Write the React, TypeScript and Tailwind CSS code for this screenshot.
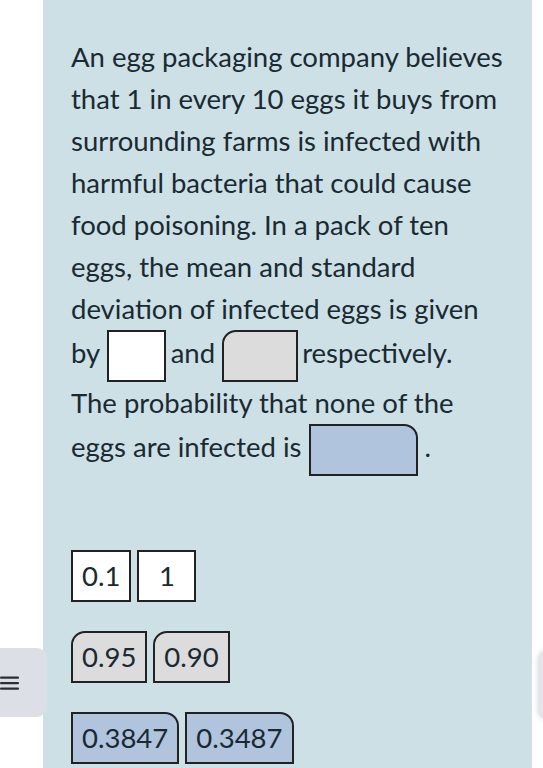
import React from "react";

const sansFont = { fontFamily: "Lato, 'Liberation Sans', sans-serif" };

function DropBox({ kind }: { kind: "white" | "gray" | "blue" }) {
  if (kind === "white")
    return <span className="inline-block align-middle -mr-[2px] w-[59px] h-[52px] bg-white border-2 border-[#222]" />;
  if (kind === "gray")
    return <span className="inline-block align-middle -mr-[3px] w-[76px] h-[52px] bg-[#dcdcdc] border-2 border-[#222] rounded-tl-[14px]" />;
  return <span className="inline-block align-middle w-[109px] h-[52px] bg-[#b0c4de] border-2 border-[#222] rounded-tr-[14px]" />;
}

function Chip({ label, kind }: { label: string; kind: "white" | "gray" | "blue" }) {
  const base = "h-[52px] flex items-center justify-center border-2 border-[#222] px-[9px] text-[27.5px] text-[#1a2a32]";
  if (kind === "white") return <div className={base + " bg-white min-w-[59px]"}>{label}</div>;
  if (kind === "gray") return <div className={base + " bg-[#dcdcdc] rounded-tl-[14px]"}>{label}</div>;
  return <div className={base + " bg-[#b0c4de] rounded-tr-[14px]"}>{label}</div>;
}

export default function App() {
  return (
    <div className="relative min-h-[768px] bg-white overflow-hidden" style={sansFont}>
      <div className="ml-[43px] w-[489px] min-h-[768px] bg-[#cde0e6] pl-[28px] pr-[22px] pt-[36px]">
        <p className="text-[27.5px] leading-[42px] text-[#1a2a32]">
          An egg packaging company believes that 1 in every 10 eggs it buys from surrounding farms is infected
          with harmful bacteria that could cause food poisoning. In a pack of ten eggs, the mean and standard
          deviation of infected eggs is given by <DropBox kind="white" /> and <DropBox kind="gray" /> respectively.
          <br />
          The probability that none of the eggs are infected is <DropBox kind="blue" /> .
        </p>

        <div className="mt-[74px] flex flex-col gap-[29px]">
          <div className="flex gap-[6px]">
            <Chip label="0.1" kind="white" />
            <Chip label="1" kind="white" />
          </div>
          <div className="flex gap-[6px]">
            <Chip label="0.95" kind="gray" />
            <Chip label="0.90" kind="gray" />
          </div>
          <div className="flex gap-[6px]">
            <Chip label="0.3847" kind="blue" />
            <Chip label="0.3487" kind="blue" />
          </div>
        </div>
      </div>

      {/* side tabs */}
      <div className="absolute left-[-20px] top-[648px] w-[67px] h-[69px] rounded-[10px] bg-[#dcdfe5] flex items-center justify-end pr-[23px]">
        <svg width="30" height="16" viewBox="0 0 30 16">
          <rect x="0" y="1" width="4" height="3" fill="#2a2f36" />
          <rect x="0" y="6.5" width="4" height="3" fill="#2a2f36" />
          <rect x="0" y="12" width="4" height="3" fill="#2a2f36" />
          <rect x="6" y="1.5" width="19" height="2.2" rx="1" fill="#2a2f36" />
          <rect x="6" y="7" width="19" height="2.2" rx="1" fill="#2a2f36" />
          <rect x="6" y="12.5" width="19" height="2.2" rx="1" fill="#2a2f36" />
        </svg>
      </div>
      <div className="absolute left-[538px] top-[650px] w-[40px] h-[70px] rounded-[10px] bg-[#e4e5ea] shadow-[0_0_6px_rgba(0,0,0,0.15)]" />
    </div>
  );
}
